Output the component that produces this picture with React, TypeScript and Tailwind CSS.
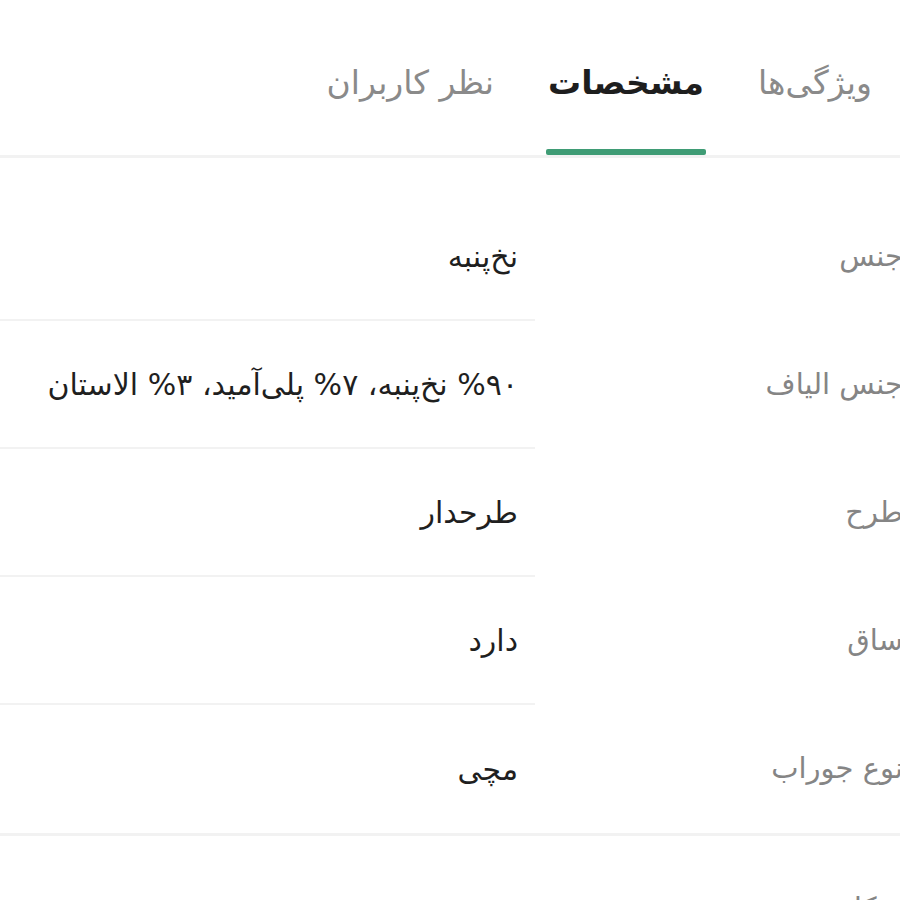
import React from 'react';

const specs = [
  { label: 'جنس', value: 'نخ‌پنبه' },
  { label: 'جنس الیاف', value: '%۹۰ نخ‌پنبه، ۷% پلی‌آمید، ۳% الاستان' },
  { label: 'طرح', value: 'طرحدار' },
  { label: 'ساق', value: 'دارد' },
  { label: 'نوع جوراب', value: 'مچی' },
];

export default function App() {
  return (
    <div className="w-[900px] h-[900px] overflow-hidden bg-white font-['DejaVu_Sans',sans-serif]">
      <div dir="rtl" className="w-[960px] ml-[-54px]">
        {/* Tabs */}
        <div className="flex items-end gap-[52px] h-[158px] border-b-[3px] border-[#f2f2f2] pr-[34px]">
          <div className="flex flex-col items-center">
            <span className="text-[33px] leading-[56px] text-[#8a8a8a]">ویژگی‌ها</span>
            <div className="mt-[38px] h-[6px] w-full" />
          </div>
          <div className="flex flex-col items-center">
            <span className="text-[33px] leading-[56px] font-bold text-[#1e1e1e]">مشخصات</span>
            <div className="mt-[38px] h-[6px] w-[160px] rounded-[2px] bg-[#3f9c75]" />
          </div>
          <div className="flex flex-col items-center">
            <span className="text-[33px] leading-[56px] text-[#8a8a8a]">نظر کاربران</span>
            <div className="mt-[38px] h-[6px] w-full" />
          </div>
        </div>

        {/* Specs */}
        <div className="pt-[35px]">
          {specs.map((s, i) => (
            <div key={s.label} className="flex h-[128px]">
              <div className="w-[371px] shrink-0 flex items-center pr-[3px] text-[29px] text-[#858585]">
                {s.label}
              </div>
              <div
                className={
                  i < specs.length - 1
                    ? 'flex-1 flex items-center pr-[17px] text-[30px] text-[#1f1f1f] whitespace-nowrap border-b-2 border-[#f2f2f2]'
                    : 'flex-1 flex items-center pr-[17px] text-[30px] text-[#1f1f1f] whitespace-nowrap'
                }
              >
                {s.value}
              </div>
            </div>
          ))}
        </div>
        <div className="h-[3px] bg-[#f2f2f2]" />
        <div className="flex pt-[52px]">
          <div className="w-[371px] shrink-0 pr-[3px] text-[29px] leading-[40px] text-[#858585]">
            شکل پنجه
          </div>
        </div>
      </div>
    </div>
  );
}
